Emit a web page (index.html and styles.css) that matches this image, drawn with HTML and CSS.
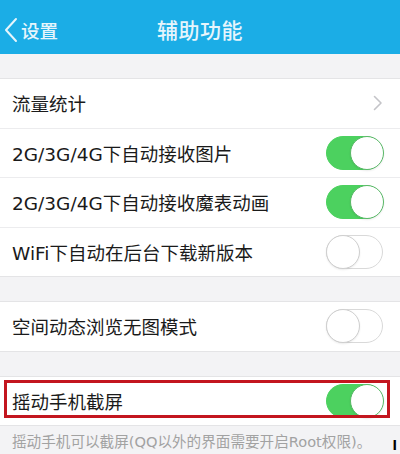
FILE: index.html
```html
<!DOCTYPE html>
<html lang="zh-CN">
<head>
<meta charset="utf-8">
<title>辅助功能</title>
<link rel="stylesheet" href="styles.css">
</head>
<body>
<div class="screen">
  <header class="navbar">
    <div class="back">
      <svg class="back-icon" width="14" height="26" viewBox="0 0 14 26"><path d="M12 2 L2 13 L12 24" fill="none" stroke="#e6f5fc" stroke-width="2" stroke-linecap="round" stroke-linejoin="round"/></svg>
      <span class="back-text">设置</span>
    </div>
    <h1 class="title">辅助功能</h1>
  </header>

  <div class="gap"></div>
  <section class="group">
    <div class="row"><span class="label">流量统计</span>
      <svg class="chevron" width="10" height="16" viewBox="0 0 10 16"><path d="M1.5 1.5 L8 8 L1.5 14.5" fill="none" stroke="#c4c4c8" stroke-width="1.6" stroke-linecap="round" stroke-linejoin="round"/></svg>
    </div>
    <div class="row"><span class="label">2G/3G/4G下自动接收图片</span><span class="toggle on"><span class="knob"></span></span></div>
    <div class="row"><span class="label">2G/3G/4G下自动接收魔表动画</span><span class="toggle on"><span class="knob"></span></span></div>
    <div class="row"><span class="label">WiFi下自动在后台下载新版本</span><span class="toggle"><span class="knob"></span></span></div>
  </section>

  <div class="gap"></div>
  <section class="group">
    <div class="row"><span class="label">空间动态浏览无图模式</span><span class="toggle"><span class="knob"></span></span></div>
  </section>

  <div class="gap"></div>
  <section class="group">
    <div class="row highlighted"><span class="label">摇动手机截屏</span><span class="toggle on"><span class="knob"></span></span></div>
  </section>

  <footer class="note">
    <span>摇动手机可以截屏(QQ以外的界面需要开启Root权限)。</span>
    <span class="stray">l</span>
  </footer>
</div>
</body>
</html>
```

FILE: styles.css
```css
* { box-sizing: border-box; }
html, body { margin: 0; padding: 0; }
body {
  width: 400px;
  height: 454px;
  overflow: hidden;
  background: #f3f3f5;
  font-family: "DejaVu Sans", "Noto Sans CJK SC", sans-serif;
  color: #1e1e1e;
}
.screen {
  display: flex;
  flex-direction: column;
  height: 454px;
}
.navbar {
  height: 54px;
  background: #1badE6;
  position: relative;
  display: flex;
  align-items: center;
  justify-content: center;
  flex: none;
}
.back {
  position: absolute;
  left: 4px;
  top: 17px;
  display: flex;
  align-items: center;
  gap: 3px;
}
.back-icon { display: block; }
.back-text {
  font-family: "Noto Sans CJK SC", sans-serif;
  font-size: 18.5px;
  color: #e6f5fc;
  font-weight: 500;
  line-height: 26px;
}
.title {
  margin: 4px 0 0;
  font-family: "Noto Sans CJK SC", sans-serif;
  font-size: 21px;
  font-weight: 500;
  color: #e6f5fc;
  letter-spacing: 0.5px;
}
.gap {
  height: 24px;
  flex: none;
}
.group {
  background: #fff;
  border-top: 1px solid #e4e4e6;
  border-bottom: 1px solid #e4e4e6;
}
.row {
  height: 49.5px;
  display: flex;
  align-items: center;
  justify-content: space-between;
  padding: 0 17px 0 12px;
  border-top: 1px solid #ececee;
  position: relative;
}
.row:first-child { border-top: none; height: 48.5px; }
.label {
  font-size: 18.5px;
  color: #1a1a1a;
  white-space: nowrap;
}
.toggle {
  width: 57px;
  height: 34px;
  border-radius: 17px;
  border: 1.5px solid #d9d9d9;
  background: #fff;
  display: flex;
  align-items: center;
  justify-content: flex-start;
}
.toggle .knob {
  width: 34px;
  height: 34px;
  border-radius: 50%;
  background: #fff;
  border: 1.5px solid #cfcfcf;
  margin-left: -1.5px;
  box-shadow: 0 1px 2px rgba(0,0,0,0.08);
}
.toggle.on {
  background: #4cd15f;
  border-color: #4cd15f;
  justify-content: flex-end;
}
.toggle.on .knob {
  margin-left: 0;
  margin-right: -1.5px;
  border-color: #58b866;
}
.highlighted::after {
  content: "";
  position: absolute;
  left: 4px;
  right: 10px;
  top: 3px;
  bottom: 7px;
  border: 3px solid #c3161f;
  pointer-events: none;
}
.note {
  flex: 1;
  display: flex;
  align-items: center;
  padding: 0 0 0 12px;
  font-size: 14.6px;
  color: #a2a2a2;
  white-space: nowrap;
}
.stray {
  margin-left: auto;
  margin-right: 3px;
  margin-top: 12px;
  color: #000;
  font-size: 13px;
  line-height: 14px;
  font-weight: bold;
}
```
